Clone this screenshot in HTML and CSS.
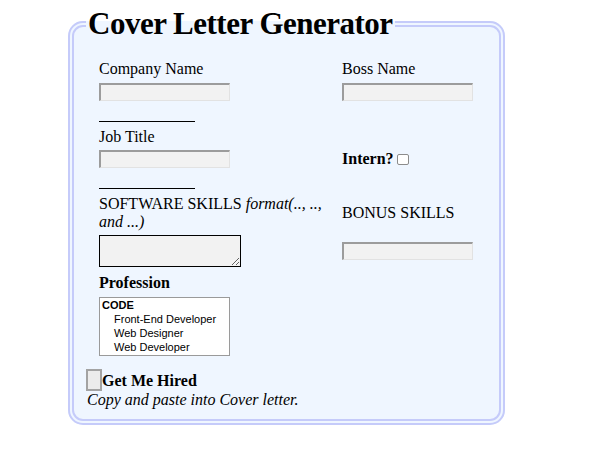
FILE: index.html
```html
<!DOCTYPE html>
<html lang="en">
<head>
<meta charset="utf-8">
<title>Cover Letter Generator</title>
<link rel="stylesheet" href="styles.css">
</head>
<body>
<fieldset class="gen">
  <legend class="title">Cover Letter Generator</legend>
  <div class="form">
    <label class="lbl">Company Name</label>
    <label class="lbl">Boss Name</label>

    <input class="txt mt5" type="text">
    <input class="txt mt5" type="text">

    <div class="rule mt20"></div>
    <div></div>

    <label class="lbl mt6">Job Title</label>
    <div></div>

    <input class="txt mt4" type="text">
    <label class="lbl bold mt4">Intern?<input class="chk" type="checkbox"></label>

    <div class="rule mt20"></div>
    <div></div>

    <label class="lbl mt6">SOFTWARE SKILLS <em>format(.., .., <br>and ...)</em></label>
    <label class="lbl mt6">BONUS SKILLS</label>

    <textarea class="area mt4"></textarea>
    <input class="txt mt4" type="text">

    <label class="lbl bold mt7">Profession</label>
    <div></div>

    <div class="list mt5">
      <div class="grp">CODE</div>
      <div class="opt">Front-End Developer</div>
      <div class="opt">Web Designer</div>
      <div class="opt">Web Developer</div>
    </div>
    <div></div>
  </div>
  <div class="submit-row">
    <button class="btn" type="button"></button>
    <strong class="hired">Get Me Hired</strong>
  </div>
  <p class="note">Copy and paste into Cover letter.</p>
</fieldset>
</body>
</html>
```

FILE: styles.css
```css
html, body {
  margin: 0;
  padding: 0;
  background: #ffffff;
}

body {
  font-family: "Liberation Serif", "Times New Roman", serif;
  font-size: 16px;
  line-height: 18px;
  color: #000;
}

.gen {
  box-sizing: border-box;
  width: 437px;
  margin: 7px 0 0 68px;
  padding: 19px 12px 10px 12px;
  border: 6px double #c5cbfa;
  border-radius: 15px;
  background: #eff6ff;
  min-inline-size: 0;
}

.title {
  font-family: "Liberation Serif", "Times New Roman", serif;
  font-weight: bold;
  font-size: 31px;
  letter-spacing: -0.5px;
  line-height: 34px;
  padding: 0 2px;
}

.form {
  display: grid;
  grid-template-columns: 243px 1fr;
  align-items: center;
  justify-items: start;
  margin-left: 13px;
}

.lbl {
  display: block;
  line-height: 18px;
}

.bold {
  font-weight: bold;
}

.mt4 { margin-top: 4px; }
.mt5 { margin-top: 5px; }
.mt6 { margin-top: 6px; }
.mt7 { margin-top: 7px; }
.mt20 { margin-top: 20px; }

.txt {
  box-sizing: border-box;
  width: 131px;
  height: 18px;
  padding: 0;
  margin-left: 0;
  margin-right: 0;
  margin-bottom: 0;
  border-style: solid;
  border-width: 2px 1px 1px 2px;
  border-color: #9c9c9c #e2e2e2 #e2e2e2 #9c9c9c;
  background: #f2f2f2;
}

.rule {
  width: 96px;
  height: 0;
  border-top: 1px solid #000;
}

.chk {
  appearance: none;
  -webkit-appearance: none;
  box-sizing: border-box;
  width: 12px;
  height: 11px;
  margin: 0 0 0 3px;
  border: 1px solid #8c8c8c;
  border-radius: 2px;
  background: #fff;
  vertical-align: -1px;
}

.area {
  box-sizing: border-box;
  width: 142px;
  height: 32px;
  margin-left: 0;
  margin-right: 0;
  margin-bottom: 0;
  padding: 0;
  border: 1px solid #000;
  background: #f2f2f2;
}

.list {
  box-sizing: border-box;
  width: 131px;
  height: 59px;
  border: 1px solid #9a9a9a;
  background: #fff;
  font-family: "Liberation Sans", Arial, sans-serif;
  font-size: 11px;
  line-height: 14px;
  padding: 0 0 0 2px;
}

.grp {
  font-weight: bold;
}

.opt {
  padding-left: 12px;
}

.submit-row {
  display: flex;
  align-items: flex-end;
  margin-top: 13px;
}

.btn {
  box-sizing: border-box;
  width: 16px;
  height: 22px;
  margin: 0;
  padding: 0;
  border: 2px solid #a3a3a3;
  background: #ececec;
}

.hired {
  display: block;
  font-weight: bold;
  line-height: 18px;
  margin-bottom: 1px;
}

.note {
  margin: 0 0 0 1px;
  font-style: italic;
  line-height: 18px;
}
```
